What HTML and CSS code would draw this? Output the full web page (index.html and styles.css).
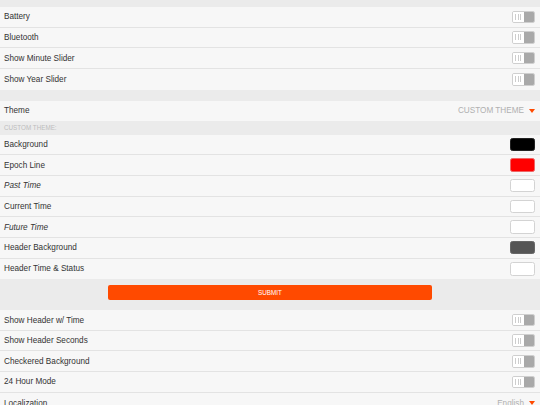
FILE: index.html
```html
<!DOCTYPE html>
<html>
<head>
<meta charset="utf-8">
<link rel="stylesheet" href="styles.css">
</head>
<body>
<div class="page">
  <div class="gap gap-top"></div>
  <div class="group">
    <div class="row"><span class="label">Battery</span><span class="toggle"><span class="knob"><i></i><i></i><i></i></span><span class="track"></span></span></div>
    <div class="row"><span class="label">Bluetooth</span><span class="toggle"><span class="knob"><i></i><i></i><i></i></span><span class="track"></span></span></div>
    <div class="row"><span class="label">Show Minute Slider</span><span class="toggle"><span class="knob"><i></i><i></i><i></i></span><span class="track"></span></span></div>
    <div class="row last"><span class="label">Show Year Slider</span><span class="toggle"><span class="knob"><i></i><i></i><i></i></span><span class="track"></span></span></div>
  </div>
  <div class="gap gap-mid"></div>
  <div class="group">
    <div class="row last"><span class="label">Theme</span><span class="select"><span class="value">CUSTOM THEME</span><span class="caret"></span></span></div>
  </div>
  <div class="section-head">CUSTOM THEME:</div>
  <div class="group">
    <div class="row"><span class="label">Background</span><span class="swatch black"></span></div>
    <div class="row"><span class="label">Epoch Line</span><span class="swatch red"></span></div>
    <div class="row"><span class="label italic">Past Time</span><span class="swatch white"></span></div>
    <div class="row"><span class="label">Current Time</span><span class="swatch white"></span></div>
    <div class="row"><span class="label italic">Future Time</span><span class="swatch white"></span></div>
    <div class="row"><span class="label">Header Background</span><span class="swatch dark"></span></div>
    <div class="row last"><span class="label">Header Time &amp; Status</span><span class="swatch white"></span></div>
  </div>
  <div class="submit-bar"><button class="submit">SUBMIT</button></div>
  <div class="group">
    <div class="row"><span class="label">Show Header w/ Time</span><span class="toggle"><span class="knob"><i></i><i></i><i></i></span><span class="track"></span></span></div>
    <div class="row"><span class="label">Show Header Seconds</span><span class="toggle"><span class="knob"><i></i><i></i><i></i></span><span class="track"></span></span></div>
    <div class="row"><span class="label">Checkered Background</span><span class="toggle"><span class="knob"><i></i><i></i><i></i></span><span class="track"></span></span></div>
    <div class="row"><span class="label">24 Hour Mode</span><span class="toggle"><span class="knob"><i></i><i></i><i></i></span><span class="track"></span></span></div>
    <div class="row last"><span class="label">Localization</span><span class="select"><span class="value">English</span><span class="caret"></span></span></div>
  </div>
</div>
</body>
</html>
```
FILE: styles.css
```css
html, body {
  margin: 0;
  padding: 0;
  background: #ebebeb;
}
body {
  width: 540px;
  height: 405px;
  overflow: hidden;
  font-family: "Liberation Sans", Arial, sans-serif;
}
.page {
  display: flex;
  flex-direction: column;
}
.gap { background: #ebebeb; }
.gap-top { height: 7px; }
.gap-mid { height: 11px; }
.group {
  display: flex;
  flex-direction: column;
  background: #f7f7f7;
}
.row {
  box-sizing: border-box;
  height: 20.67px;
  flex: none;
  display: flex;
  align-items: center;
  justify-content: space-between;
  padding: 0 5px 0 4px;
  border-bottom: 1px solid #e3e3e3;
}
.row.last { border-bottom: none; }
.label {
  font-size: 8.2px;
  color: #333;
}
.italic { font-style: italic; }
.toggle {
  box-sizing: border-box;
  width: 23px;
  height: 12.5px;
  border: 1px solid #cfcfcf;
  border-radius: 2px;
  display: flex;
  overflow: hidden;
}
.knob {
  flex: 1;
  background: #fff;
  display: flex;
  align-items: center;
  justify-content: center;
  gap: 1.3px;
}
.knob i {
  display: block;
  width: 1px;
  height: 6px;
  background: #cdcdcd;
}
.track {
  flex: 1;
  background: #a9a9a9;
}
.select {
  display: flex;
  align-items: center;
  gap: 5px;
}
.value {
  font-size: 8.2px;
  color: #b0b0b0;
}
.caret {
  width: 0;
  height: 0;
  border-left: 3.5px solid transparent;
  border-right: 3.5px solid transparent;
  border-top: 4px solid #ff4a00;
}
.section-head {
  box-sizing: border-box;
  height: 13.3px;
  display: flex;
  align-items: center;
  padding-left: 4px;
  font-size: 6.3px;
  color: #bdbdbd;
  background: #ebebeb;
}
.swatch {
  box-sizing: border-box;
  width: 25px;
  height: 13.5px;
  border-radius: 2.5px;
  border: 1px solid #d3d3d3;
}
.swatch.black { background: #000; border-color: #222; }
.swatch.red { background: #ff0000; border-color: #e66; }
.swatch.white { background: #fff; }
.swatch.dark { background: #555; border-color: #666; }
.submit-bar {
  box-sizing: border-box;
  height: 31px;
  display: flex;
  align-items: flex-start;
  justify-content: center;
  background: #ebebeb;
  padding-top: 6px;
}
.submit {
  width: 324px;
  height: 15px;
  border: none;
  border-radius: 2px;
  background: #ff4a00;
  color: #fff;
  font-family: "Liberation Sans", Arial, sans-serif;
  font-size: 6.3px;
  padding: 0;
}
```
